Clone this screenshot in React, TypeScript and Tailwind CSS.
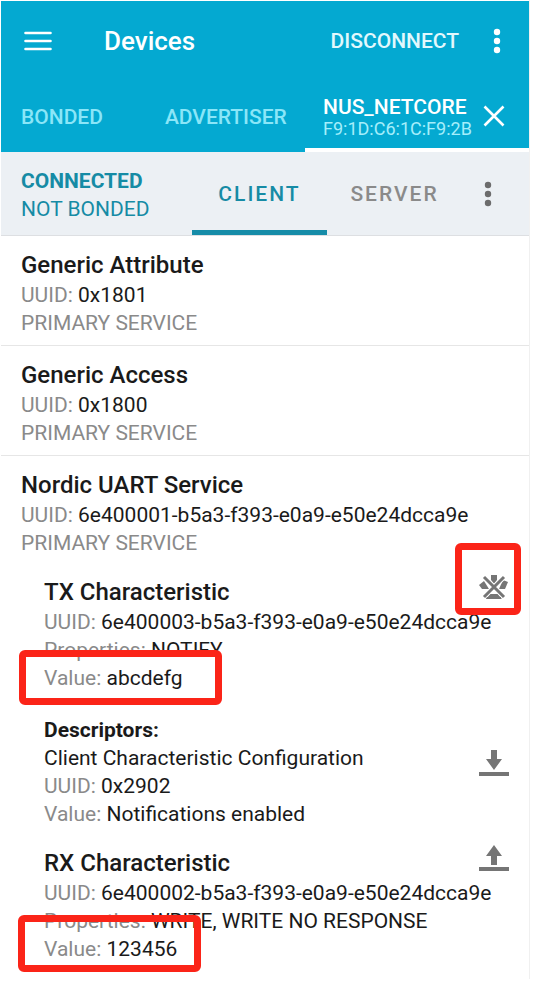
import type { ReactNode } from 'react';

function Dots({ className }: { className: string }) {
  return (
    <svg viewBox="0 0 8 26" className={className} fill="currentColor" aria-hidden="true">
      <circle cx="4" cy="4" r="3.2" />
      <circle cx="4" cy="13" r="3.2" />
      <circle cx="4" cy="22" r="3.2" />
    </svg>
  );
}

function NotifyOffIcon() {
  return (
    <svg viewBox="0 0 30 26" className="h-[26px] w-[30px]" fill="#757575" aria-hidden="true">
      <path d="M12 1h6v5l-3 4-3-4z" />
      <path d="M0 11l5-4 5 8-7 0z" />
      <path d="M24 6l5 2-3 7-6 0z" />
      <path d="M11 20h8l4 5H7z" />
      <path d="M5 3l20 20M25 3L5 23" stroke="#fff" strokeWidth="5" />
      <path d="M5 3l20 20M25 3L5 23" stroke="#757575" strokeWidth="3" />
      <path d="M8 23h14v2H7z" />
    </svg>
  );
}

function ReadIcon() {
  return (
    <svg viewBox="0 0 30 26" className="h-[26px] w-[30px]" fill="#757575" aria-hidden="true">
      <path d="M12 0h6v9h5l-8 11-8-11h5z" />
      <path d="M0 22h30v4H0z" />
    </svg>
  );
}

function WriteIcon() {
  return (
    <svg viewBox="0 0 30 26" className="h-[26px] w-[30px]" fill="#757575" aria-hidden="true">
      <path d="M12 20h6v-9h5L15 0 7 11h5z" />
      <path d="M0 22h30v4H0z" />
    </svg>
  );
}

function Field({ label, children }: { label: string; children: ReactNode }) {
  return (
    <p>
      <span className="text-[#8a8a8a]">{label}:</span> {children}
    </p>
  );
}

function Title({ children }: { children: ReactNode }) {
  return <h2 className="text-[24px] leading-8 font-medium">{children}</h2>;
}

function Service({ name, uuid, children }: { name: string; uuid: string; children?: ReactNode }) {
  return (
    <section className="border-b border-[#e6e6e6] px-5 pt-[13px] pb-2 last:border-b-0 last:pb-4">
      <Title>{name}</Title>
      <Field label="UUID">{uuid}</Field>
      <p className="text-[#8a8a8a]">PRIMARY SERVICE</p>
      {children}
    </section>
  );
}

export default function App() {
  return (
    <div className="min-h-screen bg-white font-['Roboto',sans-serif] text-[21px] leading-7 text-[#1a1a1a]">
      <div className="mr-[5px] ml-px border-r border-[#f0f0f0] pt-px">
        <header className="bg-[#04a9d1] text-white">
          <div className="flex h-20 items-center pr-7 pl-[23px]">
            <button type="button" aria-label="Menu">
              <svg viewBox="0 0 28 20" className="h-5 w-7" stroke="currentColor" strokeWidth="2.6" strokeLinecap="round" aria-hidden="true">
                <path d="M1.500 2h25M1.500 10h25M1.500 18h25" />
              </svg>
            </button>
            <h1 className="ml-[52px] text-[26px] font-medium">Devices</h1>
            <button type="button" className="ml-auto font-medium text-[#e2f8fd]">DISCONNECT</button>
            <button type="button" aria-label="More options" className="ml-[34px]">
              <Dots className="h-[26px] w-2" />
            </button>
          </div>
          <nav className="flex h-[71px] font-medium text-[#8be6f8]">
            <button type="button" className="pr-8 pl-5">BONDED</button>
            <button type="button" className="pl-[30px]">ADVERTISER</button>
            <div className="ml-auto flex w-[224px] items-center justify-between border-b-4 border-white pt-[3px] pr-6 pl-[18px] text-white">
              <button type="button" className="pt-[3px] text-left leading-[22px]">
                <span className="block text-[21px]">NUS_NETCORE</span>
                <span className="block text-[18px] font-normal text-[#a5eefb]">F9:1D:C6:1C:F9:2B</span>
              </button>
              <button type="button" aria-label="Close tab">
                <svg viewBox="0 0 22 22" className="size-[22px]" stroke="currentColor" strokeWidth="2.6" aria-hidden="true">
                  <path d="M1.500 1.500l19 19M20.500 1.500l-19 19" />
                </svg>
              </button>
            </div>
          </nav>
        </header>

        <div className="flex h-[84px] border-b border-[#dddfe2] bg-[#ecf0f4]">
          <div className="flex-1 pt-[15px] pl-5 text-[#168ba5]">
            <p className="font-bold">CONNECTED</p>
            <p>NOT BONDED</p>
          </div>
          <button type="button" className="w-[135px] border-b-[5px] border-[#168ca8] pt-1.5 font-medium tracking-[2px] text-[#168ba5]">CLIENT</button>
          <button type="button" className="w-[135px] font-medium tracking-[2px] text-[#8a8a8a]">SERVER</button>
          <button type="button" aria-label="More actions" className="flex w-[67px] items-center pl-[22px] text-[#6c6c6c]">
            <Dots className="h-[26px] w-2" />
          </button>
        </div>

        <main>
          <Service name="Generic Attribute" uuid="0x1801" />
          <Service name="Generic Access" uuid="0x1800" />
          <Service name="Nordic UART Service" uuid="6e400001-b5a3-f393-e0a9-e50e24dcca9e">
            <div className="pl-[23px]">
              <article className="relative mt-[19px]">
                <Title>TX Characteristic</Title>
                <Field label="UUID">6e400003-b5a3-f393-e0a9-e50e24dcca9e</Field>
                <Field label="Properties">NOTIFY</Field>
                <div className="relative">
                  <Field label="Value">abcdefg</Field>
                  <div className="absolute -top-3.5 -left-[25px] h-[55px] w-[203px] rounded-md border-[7px] border-[#fb2418]" />
                </div>
                <button type="button" aria-label="Toggle notifications" className="absolute -top-[33px] -right-3 flex h-[72px] w-[66px] items-end justify-end rounded-md border-[7px] border-[#fb2418] pr-[5px] pb-2">
                  <NotifyOffIcon />
                </button>
              </article>
              <div className="relative mt-6">
                <h3 className="font-bold">Descriptors:</h3>
                <p>Client Characteristic Configuration</p>
                <Field label="UUID">0x2902</Field>
                <Field label="Value">Notifications enabled</Field>
                <button type="button" aria-label="Read descriptor" className="absolute top-[34px] right-0">
                  <ReadIcon />
                </button>
              </div>
              <article className="relative mt-[19px]">
                <Title>RX Characteristic</Title>
                <Field label="UUID">6e400002-b5a3-f393-e0a9-e50e24dcca9e</Field>
                <Field label="Properties">WRITE, WRITE NO RESPONSE</Field>
                <div className="relative">
                  <Field label="Value">123456</Field>
                  <div className="absolute -top-5 -left-[26px] h-[57px] w-[183px] rounded-md border-[7px] border-[#fb2418]" />
                </div>
                <button type="button" aria-label="Write value" className="absolute -top-0.5 right-0">
                  <WriteIcon />
                </button>
              </article>
            </div>
          </Service>
        </main>
      </div>
    </div>
  );
}
